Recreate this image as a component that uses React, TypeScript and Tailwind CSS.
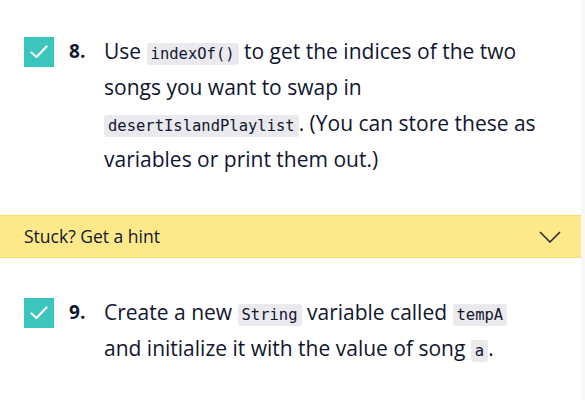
import React from 'react';

function Code({ children }: { children: React.ReactNode }) {
  return (
    <code className="rounded-[3px] bg-[#eaeaee] px-[4px] py-[2px] font-['DejaVu_Sans_Mono',monospace] text-[15.5px] leading-none text-[#10162f]">
      {children}
    </code>
  );
}

function CheckBox() {
  return (
    <div className="flex h-[30px] w-[30px] shrink-0 items-center justify-center bg-[#3bc5bd]">
      <svg width="18" height="14" viewBox="0 0 18 14" fill="none">
        <path d="M1.5 7.5 L6.5 12 L16.5 1.5" stroke="white" strokeWidth="2.2" strokeLinecap="round" strokeLinejoin="round" />
      </svg>
    </div>
  );
}

function Task({ num, children }: { num: number; children: React.ReactNode }) {
  return (
    <div className="flex items-start pl-6 pr-[31px]">
      <div className="mt-[4px]">
        <CheckBox />
      </div>
      <div className="w-[50px] shrink-0 pl-[15px] text-[19px] font-bold leading-[36px]">{num}.</div>
      <p className="text-[21px] leading-[36px]">{children}</p>
    </div>
  );
}

export default function App() {
  return (
    <div className="flex h-[400px] w-full bg-white font-['Open_Sans',sans-serif] text-[#10162f]">
      <div className="flex-1 pt-[33px]">
        <Task num={8}>
          Use <Code>indexOf()</Code> to get the indices of the two songs you want to swap in{' '}
          <Code>desertIslandPlaylist</Code>. (You can store these as variables or print them out.)
        </Task>

        <button className="mt-[38px] flex h-[43px] w-full items-center justify-between border-y border-[#f6dc6c] bg-[#fee98a] pl-6 pr-[20px] text-left">
          <span className="text-[17.5px]">Stuck? Get a hint</span>
          <svg width="22" height="12" viewBox="0 0 22 12" fill="none">
            <path d="M1 1 L11 11 L21 1" stroke="#2b2b33" strokeWidth="1.6" />
          </svg>
        </button>

        <div className="mt-[36px]">
          <Task num={9}>
            Create a new <Code>String</Code> variable called <Code>tempA</Code> and initialize it with the value of song{' '}
            <Code>a</Code>.
          </Task>
        </div>
      </div>
      <div className="w-[4px] bg-[#f7f7f7]" />
    </div>
  );
}
